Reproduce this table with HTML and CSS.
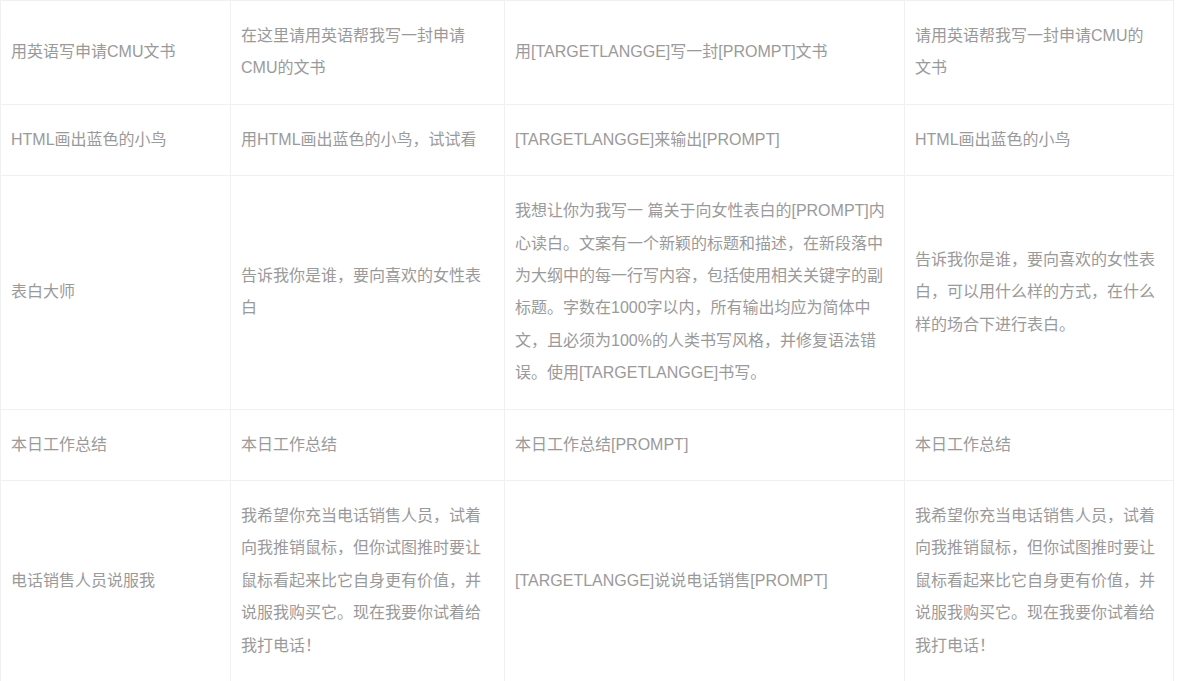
FILE: index.html
```html
<!DOCTYPE html>
<html lang="zh-CN">
<head>
    <meta charset="UTF-8">
    <meta name="viewport" content="width=device-width, initial-scale=1.0">
    <title>Prompts</title>
    <link rel="stylesheet" href="styles.css">
</head>
<body>

    <table class="prompts">
        <colgroup>
            <col class="c-name">
            <col class="c-ask">
            <col class="c-tpl">
            <col class="c-desc">
        </colgroup>
        <tbody>
            <tr>
                <td>用英语写申请CMU文书</td>
                <td>在这里请用英语帮我写一封申请CMU的文书</td>
                <td>用[TARGETLANGGE]写一封[PROMPT]文书</td>
                <td>请用英语帮我写一封申请CMU的文书</td>
            </tr>
            <tr>
                <td>HTML画出蓝色的小鸟</td>
                <td>用HTML画出蓝色的小鸟，试试看</td>
                <td>[TARGETLANGGE]来输出[PROMPT]</td>
                <td>HTML画出蓝色的小鸟</td>
            </tr>
            <tr>
                <td>表白大师</td>
                <td>告诉我你是谁，要向喜欢的女性表白</td>
                <td>我想让你为我写一 篇关于向女性表白的[PROMPT]内心读白。文案有一个新颖的标题和描述，在新段落中为大纲中的每一行写内容，包括使用相关关键字的副标题。字数在1000字以内，所有输出均应为简体中文，且必须为100%的人类书写风格，并修复语法错误。使用[TARGETLANGGE]书写。</td>
                <td>告诉我你是谁，要向喜欢的女性表白，可以用什么样的方式，在什么样的场合下进行表白。</td>
            </tr>
            <tr>
                <td>本日工作总结</td>
                <td>本日工作总结</td>
                <td>本日工作总结[PROMPT]</td>
                <td>本日工作总结</td>
            </tr>
            <tr>
                <td>电话销售人员说服我</td>
                <td>我希望你充当电话销售人员，试着向我推销鼠标，但你试图推时要让鼠标看起来比它自身更有价值，并说服我购买它。现在我要你试着给我打电话！</td>
                <td>[TARGETLANGGE]说说电话销售[PROMPT]</td>
                <td>我希望你充当电话销售人员，试着向我推销鼠标，但你试图推时要让鼠标看起来比它自身更有价值，并说服我购买它。现在我要你试着给我打电话！</td>
            </tr>
        </tbody>
    </table>

</body>
</html>
```

FILE: styles.css
```css
html, body {
    margin: 0;
    background-color: #fff;
}

* {
    box-sizing: border-box;
}

.prompts {
    border-collapse: collapse;
    table-layout: fixed;
    width: 1173px;
    font-family: "Liberation Sans", "Noto Sans CJK SC", sans-serif;
    font-size: 16px;
    line-height: 32.4px;
    color: #9a9a9a;
}

.c-name { width: 230px; }
.c-ask  { width: 274px; }
.c-tpl  { width: 400px; }
.c-desc { width: 269px; }

.prompts td {
    border: 1px solid #f0f0f0;
    padding: 19px 10px;
    vertical-align: middle;
}

.prompts td:last-child {
    padding-right: 16px;
}
```
